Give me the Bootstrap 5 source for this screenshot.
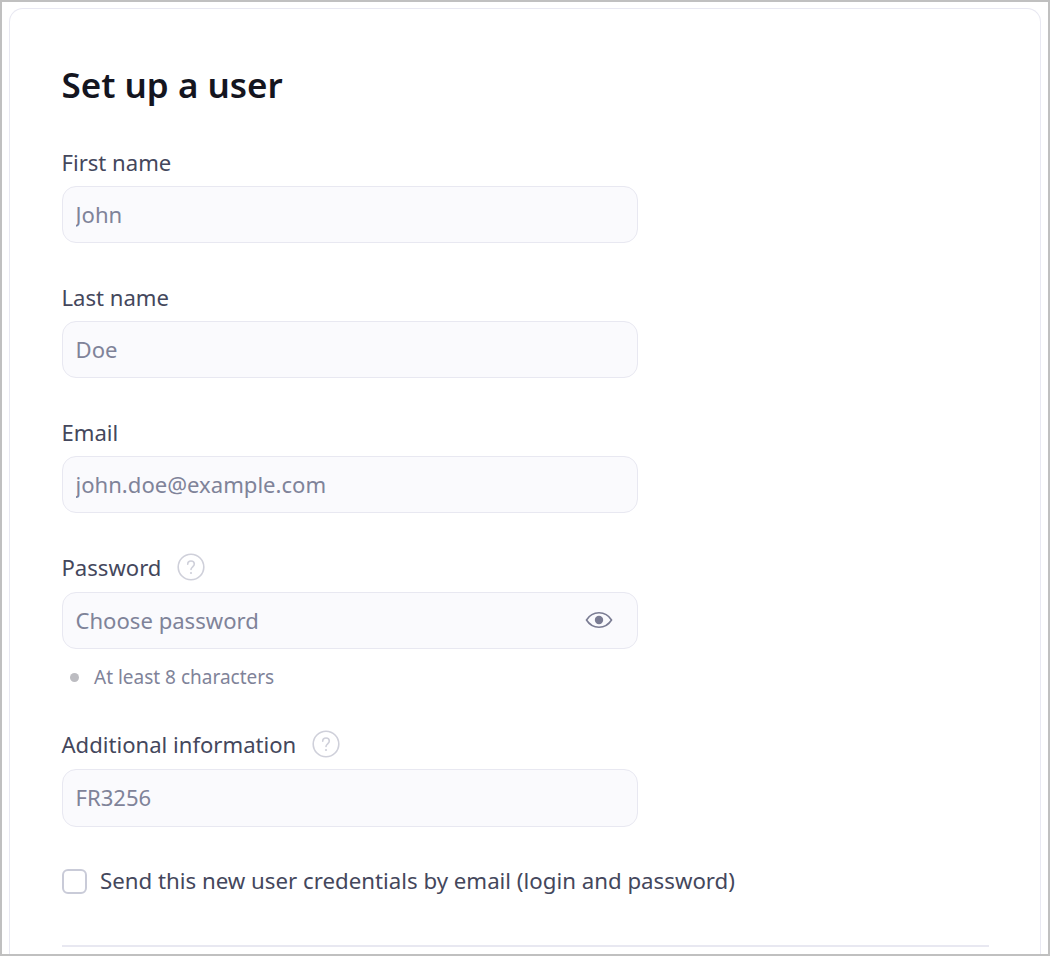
<!doctype html>
<html lang="en"><head><meta charset="utf-8">
<link href="https://cdn.jsdelivr.net/npm/bootstrap@5.3.0/dist/css/bootstrap.min.css" rel="stylesheet">
<style>
html,body{height:956px;overflow:hidden}
body{background:#fff;font-family:"Noto Sans",sans-serif;color:#44475c}
.frame{height:956px;border:2px solid #c0c0c0;padding:6px 7px 0 7px;overflow:hidden}
.panel{height:100%;border:1px solid #e8e8f1;border-bottom:0;border-radius:14px 14px 0 0;padding:52px 51px 0 52px}
.ttl{font-size:35px;line-height:48px;font-weight:600;color:#14151f;margin:0 0 37px;margin-left:-.5px}
.fld{margin-bottom:38px;width:576px}
.fld.tight{margin-bottom:0}
.lbl{font-size:22.100px;line-height:32px;color:#44475c;margin:0 0 8px -.5px;display:flex;align-items:center;gap:16px}
.fld.tight .lbl,.fld.last .lbl{margin-bottom:9px}
.inp{display:block;width:100%;height:57px;background:#fafafd;border:1px solid #e8e8f1;border-radius:14px;font-size:22.100px;padding:0 12.500px 2px;color:#44475c}
.fld.last .inp{height:58px}
.inp::placeholder{color:#7f8399;opacity:1}
.pw{position:relative}
.eye{position:absolute;right:25px;top:14px}
.hint{font-size:19px;line-height:28px;color:#7f8399;gap:15px;margin:14px 0 37px}
.dot{width:9px;height:9px;border-radius:50%;background:#bcbcc1;margin-left:8px}
.chk{width:25px;height:25px;border:2px solid #c9cbd8;border-radius:6px;background:#fff;appearance:none;margin:0}
.chklbl{font-size:22.250px;line-height:32px;gap:13px;margin-top:37px}
.rule{border-top:2px solid #e8e8f1;margin-top:48px;width:927px}
</style></head><body>
<div class="frame"><div class="panel">
<h1 class="ttl">Set up a user</h1>
<div class="fld"><label class="lbl">First name</label><input class="inp" placeholder="John"></div>
<div class="fld"><label class="lbl">Last name</label><input class="inp" placeholder="Doe"></div>
<div class="fld"><label class="lbl">Email</label><input class="inp" placeholder="john.doe@example.com"></div>
<div class="fld tight"><label class="lbl">Password
<svg width="28" height="28" viewBox="0 0 28 28" fill="none"><circle cx="14" cy="14" r="12.800" stroke="#cfd0da" stroke-width="1.600"/><path d="M10.700 11.300c0-2 1.500-3.300 3.300-3.300s3.300 1.300 3.300 3.100c0 2.600-3.300 2.800-3.300 5.400" stroke="#cfd0da" stroke-width="1.600" stroke-linecap="round"/><circle cx="14" cy="20" r="1.100" fill="#cfd0da"/></svg></label>
<div class="pw"><input class="inp" placeholder="Choose password">
<svg class="eye" width="28" height="28" viewBox="0 0 28 28" fill="none"><path d="M1.500 14C4.300 9.500 8.500 6.800 14 6.800s9.700 2.700 12.500 7.200c-2.800 4.500-7 7.200-12.500 7.200S4.300 18.500 1.500 14Z" stroke="#7a7c93" stroke-width="1.600"/><circle cx="14" cy="14" r="4.200" fill="#7a7c93"/></svg></div>
<div class="hint d-flex align-items-center"><span class="dot"></span><span>At least 8 characters</span></div></div>
<div class="fld last"><label class="lbl">Additional information
<svg width="28" height="28" viewBox="0 0 28 28" fill="none"><circle cx="14" cy="14" r="12.800" stroke="#cfd0da" stroke-width="1.600"/><path d="M10.700 11.300c0-2 1.500-3.300 3.300-3.300s3.300 1.300 3.300 3.100c0 2.600-3.300 2.800-3.300 5.400" stroke="#cfd0da" stroke-width="1.600" stroke-linecap="round"/><circle cx="14" cy="20" r="1.100" fill="#cfd0da"/></svg></label><input class="inp" placeholder="FR3256"></div>
<label class="chklbl d-flex align-items-center"><input type="checkbox" class="chk"><span>Send this new user credentials by email (login and password)</span></label>
<div class="rule"></div>
</div></div>
<script src="https://cdn.jsdelivr.net/npm/bootstrap@5.3.0/dist/js/bootstrap.bundle.min.js"></script>
</body></html>
